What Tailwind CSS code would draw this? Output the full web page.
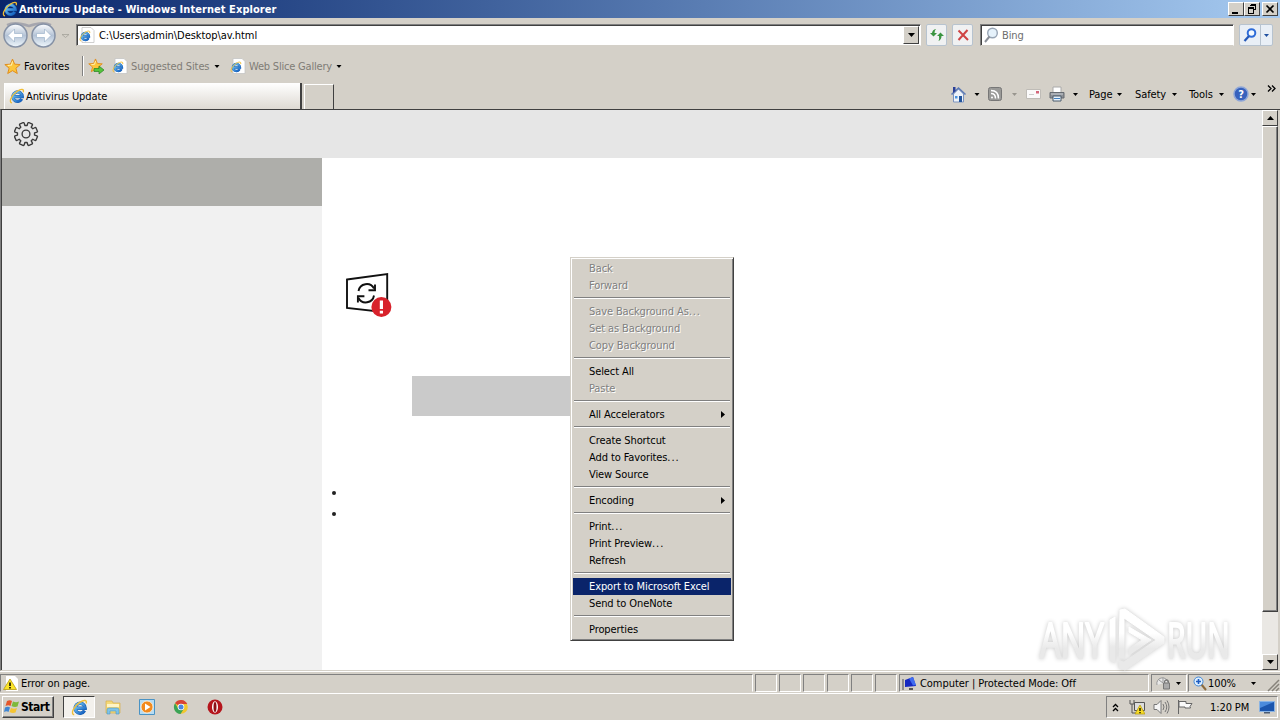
<!DOCTYPE html>
<html lang="en">

<head>
  <meta charset="UTF-8">
  <meta name="viewport" content="width=device-width, initial-scale=1.0">
  <title>Antivirus Update - Windows Internet Explorer</title>
  <script src="https://cdn.jsdelivr.net/npm/@tailwindcss/browser@4"></script>
</head>

<body class="w-[1280px] h-[720px] overflow-hidden bg-[#d4d0c8] text-black text-[11px] leading-[17px] tracking-[-0.1px] font-['DejaVu_Sans_Condensed','DejaVu_Sans',sans-serif] whitespace-nowrap">

  <!-- shared icons -->
  <svg class="absolute w-0 h-0">
    <defs>
      <linearGradient id="ball" x1="0" y1="0" x2="0" y2="1">
        <stop offset="0" stop-color="#fdfeff" />
        <stop offset=".5" stop-color="#b4c3d6" />
        <stop offset="1" stop-color="#f0f8fd" />
      </linearGradient>
      <linearGradient id="blue" x1="0" y1="0" x2="1" y2="1">
        <stop offset="0" stop-color="#7ad0f8" />
        <stop offset="1" stop-color="#0d58bd" />
      </linearGradient>
      <linearGradient id="mark" x1="0" y1="0" x2="0" y2="1">
        <stop offset=".4" stop-color="#ffffff" />
        <stop offset=".65" stop-color="#e9e9e9" />
        <stop offset="1" stop-color="#e9e9e9" />
      </linearGradient>
      <symbol id="ie" viewBox="0 0 16 16">
        <path d="M12.700 11a4.700 4.700 0 1 1 .6-2.300H5" fill="none" stroke="#1a5fae" stroke-width="3.200" />
        <path d="M12.700 11a4.700 4.700 0 1 1 .6-2.300H5" fill="none" stroke="url(#blue)" stroke-width="2.300" />
        <path d="M3 14.800C-.8 14.200 2.500 7 8.200 3.200c3.600-2.400 7.300-2.700 6 1" fill="none" stroke="#f0bd35" stroke-width="1.300" />
      </symbol>
      <symbol id="iepage" viewBox="0 0 16 16">
        <path d="M3 .5h9l3 3v12H3z" fill="#fff" stroke="#c4c4c4" stroke-width=".8" />
        <use href="#ie" x="0" y="3" width="12" height="12" />
      </symbol>
      <symbol id="star" viewBox="0 0 16 16">
        <path d="M8 1l2 4.800 5.200.4-4 3.400 1.300 5L8 11.900l-4.500 2.700 1.300-5-4-3.400L6 5.800z" fill="#fcc63c" stroke="#df8a1b" stroke-width=".9" />
        <path d="M8 3.200L7 6.700l-3.500.4" fill="none" stroke="#fff3b5" />
      </symbol>
      <symbol id="down" viewBox="0 0 5 3"><path d="M0 0h5L2.500 3z" fill="currentColor" /></symbol>
    </defs>
  </svg>

  <div class="relative flex flex-col w-full h-full">

    <!-- title bar -->
    <div class="flex items-center h-[18px] bg-linear-to-r from-[#0a246a] to-[#a6caf0] pl-[2px] pr-[2px]">
      <svg class="w-4 h-4"><use href="#ie" /></svg>
      <span class="pl-px text-white font-bold tracking-[0.06px]">Antivirus Update - Windows Internet Explorer</span>
      <div class="flex ml-auto">
        <div class="flex w-4 h-[14px] bg-[#d4d0c8] border border-t-white border-l-white border-r-[#404040] border-b-[#404040]"><svg class="w-[14px] h-3"><path d="M3 9h6v2H3z" /></svg></div>
        <div class="flex w-4 h-[14px] bg-[#d4d0c8] border border-t-white border-l-white border-r-[#404040] border-b-[#404040]"><svg class="w-[14px] h-3" fill="none" stroke="#000" shape-rendering="crispEdges"><path d="M5.500 1.500h5v5h-2M5 2.500h6M3.500 4.500h5v6h-5zM3 5.500h6" /></svg></div>
        <div class="flex w-4 h-[14px] ml-[2px] bg-[#d4d0c8] border border-t-white border-l-white border-r-[#404040] border-b-[#404040]"><svg class="w-[14px] h-3"><path d="M3.500 2.500l7 7M10.500 2.500l-7 7" stroke="#000" stroke-width="1.700" /></svg></div>
      </div>
    </div>

    <!-- address bar -->
    <div class="flex items-center h-[34px] pl-[2px] pr-[5px]">
      <svg class="w-[74px] h-[30px] shrink-0" viewBox="2 20 74 30">
        <path d="M7 25q8-4 22 1 14-5 22-1" fill="none" stroke="#a5a6ae" stroke-width="2.500" />
        <circle cx="15.500" cy="35.500" r="11.500" fill="url(#ball)" stroke="#8591a5" stroke-width="1.500" />
        <circle cx="43.500" cy="35.500" r="11.500" fill="url(#ball)" stroke="#8591a5" stroke-width="1.500" />
        <path d="M8 35.500l6.500-6.500v4.500h8v4h-8V42zM51 35.500L44.500 29v4.500h-8v4h8V42z" fill="#fff" stroke="#9fb4cb" stroke-width=".7" />
        <path d="M62 34.500h7l-3.500 3z" fill="#d4d0c8" stroke="#a5a29b" stroke-width=".8" />
      </svg>
      <div class="flex items-center w-[845px] h-[22px] bg-white border border-t-[#808080] border-l-[#808080] border-r-white border-b-[#d4d0c8] shadow-[inset_1px_1px_0_#404040]">
        <svg class="w-4 h-4 ml-[2px]"><use href="#iepage" /></svg>
        <span class="pl-1 pt-px tracking-[-0.06px]">C:\Users\admin\Desktop\av.html</span>
        <div class="flex items-center justify-center w-4 h-[18px] ml-auto mr-px bg-[#d4d0c8] border border-t-white border-l-white border-r-[#404040] border-b-[#404040]"><svg class="w-[7px] h-1"><path d="M0 0h7L3.500 4z" /></svg></div>
      </div>
      <div class="flex items-center justify-center w-[21px] h-[22px] ml-[5px] bg-[#f0f1f2] border border-[#b7c3cf] rounded-xs">
        <svg class="w-4 h-4" fill="#3a9440"><path d="M1 6l3.500 3.500L8 6H5.500q0-2.500 1.500-4-3.500.5-4 4zM8 9l3.500-3.500L15 9h-2.500q0 3.500-3 5 1-2.500.5-5z" /></svg>
      </div>
      <div class="flex items-center justify-center w-[21px] h-[22px] ml-[5px] bg-[#f0f1f2] border border-[#b7c3cf] rounded-xs">
        <svg class="w-4 h-4"><path d="M3.500 3.500l9.500 9.500M12.500 3l-9 10" stroke="#cf4444" stroke-width="2" /></svg>
      </div>
      <div class="flex items-center w-[254px] h-[22px] ml-[7px] bg-white border border-t-[#808080] border-l-[#808080] border-r-white border-b-[#d4d0c8] shadow-[inset_1px_1px_0_#404040]">
        <svg class="w-4 h-4 ml-[2px]" fill="none"><circle cx="9.500" cy="6" r="4.800" fill="#e6f2fb" stroke="#98a5b5" stroke-width="1.400" /><path d="M6.500 9.500L2 15" stroke="#8a8f98" stroke-width="2" /></svg>
        <span class="pl-[3px] pt-px text-[#6d6d6d]">Bing</span>
      </div>
      <div class="flex items-center w-[34px] h-[22px] ml-[5px] bg-[#e9eff6] border border-[#b7c3cf] rounded-xs">
        <svg class="w-5 h-4" fill="none"><circle cx="11.500" cy="6" r="3.800" fill="#f4faff" stroke="#2e6cd8" stroke-width="2" /><path d="M9 9l-4.500 5" stroke="#2458b8" stroke-width="2.200" /></svg>
        <div class="flex items-center justify-center flex-1 h-full border-l border-[#b7c3cf] text-[#1f4fa0]"><svg class="w-[5px] h-[3px]"><use href="#down" /></svg></div>
      </div>
    </div>

    <!-- favorites bar -->
    <div class="flex items-center h-7 pl-1">
      <svg class="w-[17px] h-[17px]"><use href="#star" /></svg>
      <span class="w-[59px] pl-[3px] tracking-[0.1px]">Favorites</span>
      <div class="w-[2px] h-5 ml-[2px] border-l border-[#808080] border-r border-r-white"></div>
      <svg class="w-[17px] h-[17px] ml-[4px]"><use href="#star" width="15" height="15" /><path d="M6 10.500h5V8l5 4-5 4v-2.500H6z" fill="#54c43c" stroke="#268320" stroke-width=".7" /></svg>
      <svg class="w-4 h-4 ml-[7px]"><use href="#iepage" /></svg>
      <span class="w-[85px] pl-[3px] pt-px text-[#7f7c76]">Suggested Sites</span>
      <svg class="w-[6px] h-[3px] ml-px"><use href="#down" /></svg>
      <svg class="w-4 h-4 ml-[10px]"><use href="#iepage" /></svg>
      <span class="w-[87px] pl-[3px] pt-px tracking-[-0.2px] text-[#7f7c76]">Web Slice Gallery</span>
      <svg class="w-[6px] h-[3px] ml-[3px]"><use href="#down" /></svg>
    </div>

    <!-- tabs + command bar -->
    <div class="flex items-end h-[29px] pl-1">
      <div class="flex items-center w-[298px] h-[26px] pl-1 bg-linear-to-b from-white to-[#dedad3] border-r-2 border-[#404040] border-l border-l-white">
        <svg class="w-4 h-4"><use href="#ie" /></svg>
        <span class="pl-px">Antivirus Update</span>
      </div>
      <div class="w-[30px] h-[25px] ml-[2px] border-t border-l border-t-white border-l-white border-r border-r-[#404040]"></div>
      <div class="flex items-center h-[30px] ml-auto pr-[4px]">
        <svg class="w-[17px] h-[17px]"><path d="M3.500 8v8h10V8L8.500 3z" fill="#eef3fa" stroke="#7c93be" /><path d="M1.500 8.500l7-6.500 7 6.500" fill="none" stroke="#5c7ab5" stroke-width="1.600" /><path d="M3 1h2.500v4L3 7z" fill="#2a3f97" /><path d="M9 10h3v6H9z" fill="#23559c" /><path d="M5 10h2.500v2.500H5z" fill="#4a94df" /></svg>
        <svg class="w-[6px] h-[3px] ml-[7px]"><use href="#down" /></svg>
        <svg class="w-[14px] h-[14px] ml-[8px]" fill="none" stroke="#fff" stroke-width="1.500"><rect x=".5" y=".5" width="13" height="13" rx="2" fill="#9a9a98" stroke="#777" stroke-width="1" /><circle cx="4" cy="10.500" r="1" fill="#fff" stroke="none" /><path d="M3 6.500q4.500 0 4.500 5M3 3.500q7.500 0 7.500 8" /></svg>
        <svg class="w-[5px] h-[3px] ml-[10px] text-[#98958e]"><use href="#down" /></svg>
        <svg class="w-[15px] h-3 ml-[9px]"><path d="M.5 1.500h14v9H.5z" fill="#fbfafa" stroke="#bfbcb7" /><path d="M10 3h3v2.500h-3z" fill="#d4667a" /><path d="M3 6.500h5" stroke="#ccc" /></svg>
        <svg class="w-4 h-4 ml-2"><path d="M4 1h8v6H4z" fill="#fff" stroke="#aaa" /><path d="M1 6.500h14v5.500H1z" fill="#8c9096" stroke="#666b71" /><path d="M2 8h12" stroke="#c9cdd3" /><path d="M4 10h8v5H4z" fill="#e8f2fb" stroke="#4a5a6a" /><path d="M5 12.500h6" stroke="#4380be" /></svg>
        <svg class="w-[5px] h-[3px] ml-[8px]"><use href="#down" /></svg>
        <span class="w-[25px] ml-[11px]">Page</span>
        <svg class="w-[5px] h-[3px] ml-[3px]"><use href="#down" /></svg>
        <span class="w-8 ml-[13px]">Safety</span>
        <svg class="w-[5px] h-[3px] ml-[5px]"><use href="#down" /></svg>
        <span class="w-[26px] ml-[12px]">Tools</span>
        <svg class="w-[5px] h-[3px] ml-[4px]"><use href="#down" /></svg>
        <svg class="w-4 h-4 ml-[9px]"><circle cx="8" cy="8" r="7" fill="#3862bd" stroke="#8ea6d8" stroke-width="1.500" /><text x="8" y="12" text-anchor="middle" font-size="11" font-weight="bold" fill="#fff">?</text></svg>
        <svg class="w-[5px] h-[3px] ml-[2px]"><use href="#down" /></svg>
        <svg class="w-[9px] h-[7px] ml-[11px] mb-3" fill="none" stroke="#000" stroke-width="1.300"><path d="M1 .5l3 3-3 3M5 .5l3 3-3 3" /></svg>
      </div>
    </div>

    <!-- page -->
    <div class="flex h-[562px] border-t border-t-[#404040] border-l border-l-[#808080] border-b border-b-[#d4d0c8] pr-[2px]">
      <div class="flex flex-col flex-1 bg-white border-l border-[#404040]">
        <div class="flex items-center h-12 pl-3 bg-[#e6e6e6]">
          <svg class="w-[25px] h-[25px]" viewBox="0 0 25 25" fill="none" stroke="#3a3a3a" stroke-width="1.350" stroke-linejoin="round">
            <path id="gear" d="" />
            <circle cx="12" cy="12" r="3.900" />
          </svg>
        </div>
        <div class="flex flex-1">
          <div class="w-80 bg-[#f1f1f1]">
            <div class="h-12 bg-[#aeaeaa]"></div>
          </div>
          <div class="flex-1">
            <svg class="w-[50px] h-[46px] mt-[114px] ml-[23px]" viewBox="345 272 50 46" fill="none" stroke="#111" stroke-width="1.900">
              <path d="M347 279.500l40.200-5.500v38.500L347 308z" />
              <path d="M358.500 291a8.300 8.300 0 0 1 15.500-2.500M374 295.500a8.300 8.300 0 0 1-15.500 2.500" />
              <path d="M375 284.500v5.800h-6.500M357.900 302.500v-6.300h6.500" />
              <circle cx="381.400" cy="307" r="10" fill="#d8222b" stroke="none" />
              <path d="M381.400 300.500v8.500M381.400 310.800v2.700" stroke="#fff" stroke-width="3.200" />
            </svg>
            <div class="w-[240px] h-10 mt-[58px] ml-[90px] bg-[#cacaca]"></div>
            <div class="w-[4px] h-[4px] mt-[75px] ml-[10px] rounded-full bg-[#222]"></div>
            <div class="w-[4px] h-[4px] mt-[17px] ml-[10px] rounded-full bg-[#222]"></div>
          </div>
        </div>
      </div>

      <!-- scrollbar -->
      <div class="flex flex-col w-4 bg-[#eae8e4]">
        <div class="flex items-center justify-center h-4 bg-[#d4d0c8] border border-t-white border-l-white border-r-[#404040] border-b-[#404040]"><svg class="w-[7px] h-1"><path d="M0 4h7L3.500 0z" /></svg></div>
        <div class="h-[486px] bg-[#d4d0c8] border border-t-white border-l-white border-r-[#404040] border-b-[#404040] shadow-[inset_-1px_-1px_0_#808080]"></div>
        <div class="flex items-center justify-center h-4 mt-auto bg-[#d4d0c8] border border-t-white border-l-white border-r-[#404040] border-b-[#404040]"><svg class="w-[7px] h-1"><path d="M0 0h7L3.500 4z" /></svg></div>
      </div>
    </div>

    <!-- status bar -->
    <div class="flex items-end h-[23px] pb-px border-t border-white border-b">
      <div class="flex items-center w-[753px] h-[18px] pl-[2px] border border-[#808080] border-r-white border-b-[#d4d0c8]">
        <svg class="w-[15px] h-[15px]"><path d="M3 0h9l3 3v12H3z" fill="#fff" /><path d="M7 3l6.500 10.500H.5z" fill="#fbe428" stroke="#b79a12" stroke-width=".8" /><path d="M7 6.500v3.500M7 11v1.500" stroke="#000" stroke-width="1.500" /></svg>
        <span class="pl-[3px]">Error on page.</span>
      </div>
      <div class="flex gap-[2px] pl-[2px]">
        <div class="w-[22px] h-[18px] border border-[#808080] border-r-white border-b-white"></div>
        <div class="w-[22px] h-[18px] border border-[#808080] border-r-white border-b-white"></div>
        <div class="w-[22px] h-[18px] border border-[#808080] border-r-white border-b-white"></div>
        <div class="w-[22px] h-[18px] border border-[#808080] border-r-white border-b-white"></div>
        <div class="w-[22px] h-[18px] border border-[#808080] border-r-white border-b-white"></div>
        <div class="w-[22px] h-[18px] border border-[#808080] border-r-white border-b-white"></div>
      </div>
      <div class="flex items-center w-[250px] h-[18px] ml-[2px] pl-[2px] border border-[#808080] border-r-white border-b-white">
        <svg class="w-4 h-4"><path d="M1 4v11" stroke="#777" stroke-width="1.500" /><path d="M3 5l8-3 3 9-11 1z" fill="#1528c0" /><path d="M7 3.500L11 2l3 8-3 .5z" fill="#3f6bf0" /><path d="M7 13h4v2H7z" fill="#555" /></svg>
        <span class="pl-[2px] tracking-[-0.05px]">Computer | Protected Mode: Off</span>
      </div>
      <div class="flex items-center w-[36px] h-[18px] ml-[2px] pl-1 border border-[#808080] border-r-white border-b-white">
        <svg class="w-4 h-4"><path d="M1 10a5.500 5.500 0 0 1 11-3" fill="#e8e8e8" stroke="#999" /><path d="M7 2.500v5M3 5l4 3" stroke="#999" /><path d="M7.500 8h6v6h-6z" fill="#aaa" stroke="#777" /><path d="M8.500 8q0-3 2-3t2 3" fill="none" stroke="#777" stroke-width="1.300" /></svg>
        <svg class="w-[5px] h-[3px] ml-[4px]"><use href="#down" /></svg>
      </div>
      <div class="flex items-center w-[92px] h-[18px] ml-px pl-[4px] border border-[#808080] border-r-0 border-b-white">
        <svg class="w-[14px] h-[15px]"><path d="M8 8l5 6" stroke="#8c6a3d" stroke-width="2" /><circle cx="5.500" cy="5.500" r="4.500" fill="#dceefe" stroke="#4387d6" /><path d="M5.500 3v5M3 5.500h5" stroke="#1c5bc0" stroke-width="1.600" /></svg>
        <span class="w-[30px] pl-px">100%</span>
        <svg class="w-[5px] h-[3px] ml-[14px]"><use href="#down" /></svg>
        <svg class="w-[13px] h-[13px] ml-auto mt-1" stroke="#87837b" stroke-width="1.500"><path d="M1 12L12 1M5 12l7-7M9 12l3-3" /></svg>
      </div>
    </div>

    <!-- taskbar -->
    <div class="flex items-center h-[26px] pl-[2px] pr-[2px]">
      <div class="flex items-center w-[52px] h-[22px] pl-px bg-[#d4d0c8] border border-t-white border-l-white border-r-[#404040] border-b-[#404040] shadow-[inset_-1px_-1px_0_#808080]">
        <svg class="w-4 h-4"><path d="M3 2q3-1.500 5 0L6.500 7q-2-1.500-5 0z" fill="#e5572b" /><path d="M9 2.500q3 1.500 6 0l-1.500 5q-3 1-6-.5z" fill="#7eb93b" /><path d="M1 8.500q3-1.500 5 0L4.500 13q-2-1.500-4.500 0z" fill="#3f86d3" /><path d="M7 9q3 1.500 6 0l-1.500 4.500q-3 1-6-.5z" fill="#f5c432" /></svg>
        <span class="pl-px font-bold text-[12px] tracking-[-0.45px]">Start</span>
      </div>
      <div class="flex items-center justify-center w-8 h-[22px] ml-[9px] bg-[#f3f1ed] border border-t-[#404040] border-l-[#404040] border-r-white border-b-white"><svg class="w-[17px] h-[17px]"><use href="#ie" /></svg></div>
      <svg class="w-4 h-4 ml-[10px]"><path d="M1 2h6l1 2h7v10H1z" fill="#f4d979" stroke="#d7b04b" stroke-width=".7" /><path d="M2 5h12v3H2z" fill="#fff4c5" /><path d="M2 15v-4q0-2 2-2h8q2 0 2 2v4h-3v-3H5v3z" fill="#7fc3e8" stroke="#4c97c2" stroke-width=".6" /></svg>
      <svg class="w-4 h-4 ml-[18px]"><path d="M.5.5h15v15H.5z" fill="#b6dcf3" stroke="#4a93c4" /><circle cx="8" cy="8" r="6" fill="#f28a1e" stroke="#fff3df" stroke-width=".8" /><path d="M6 4.500v7L11.500 8z" fill="#fff" /></svg>
      <svg class="w-4 h-4 ml-[18px]"><circle cx="8" cy="8" r="6.800" fill="#f1c72f" /><path d="M8 8L2 4.200A7 7 0 0 1 14.300 5H8z" fill="#d84336" /><path d="M2 4.200A7 7 0 0 0 7.500 15L11 9.500 8 8 5.200 9.500z" fill="#3ba356" /><circle cx="8" cy="8" r="3.300" fill="#fff" /><circle cx="8" cy="8" r="2.500" fill="#4a86e0" /></svg>
      <svg class="w-4 h-4 ml-[18px]"><circle cx="8" cy="8" r="7.500" fill="#b5151c" /><ellipse cx="8" cy="8" rx="3" ry="5.800" fill="#fff" /><ellipse cx="8" cy="8" rx="1.500" ry="5" fill="#8d1016" /></svg>
      <div class="flex items-center w-[172px] h-[22px] ml-auto pl-[5px] border border-[#808080] border-r-white border-b-white">
        <svg class="w-[7px] h-[9px]" fill="none" stroke="#000" stroke-width="1.300"><path d="M1 4l2.500-2.500L6 4M1 8l2.500-2.500L6 8" /></svg>
        <svg class="w-4 h-4 ml-[10px]"><path d="M5.500 3.500h10v8h-10z" fill="#ddd" stroke="#555" /><path d="M1 1v4h4V1M3 5v9h4" fill="none" stroke="#555" /><path d="M11 6l5 9H6z" fill="#f8dc26" stroke="#b3980c" stroke-width=".7" /><path d="M11 9v3M11 13v1.300" stroke="#000" stroke-width="1.300" /></svg>
        <svg class="w-[17px] h-4 ml-[8px]" fill="none" stroke="#777"><path d="M1 5.500h3l4-4v13l-4-4H1z" fill="#f5f5f5" /><path d="M10 5q2 3 0 6M12 3q3.500 5 0 10M14 1.500q4 6.500 0 13" /></svg>
        <svg class="w-4 h-4 ml-[7px]" fill="#fafafa" stroke="#666"><path d="M1.500 1v14M2 2.500h7v2h6l-2 3 .5 1.500H8V8H2z" /></svg>
        <span class="ml-[17px] pt-px">1:20 PM</span>
        <svg class="w-4 h-4 ml-auto mr-[2px]"><path d="M.5 2.500h15v10H.5z" fill="#1c56ad" stroke="#8ab4e4" /><path d="M1 3h14L1 9z" fill="#4b8bdc" /><path d="M5 13h6v1.500H5z" fill="#4a5a72" /></svg>
      </div>
    </div>

    <!-- context menu -->
    <div class="absolute left-[570px] top-[257px] w-[164px] h-[384px] p-px bg-[#d4d0c8] border border-t-[#d4d0c8] border-l-[#d4d0c8] border-r-[#404040] border-b-[#404040] shadow-[inset_1px_1px_0_#fff,inset_-1px_-1px_0_#808080]">
      <div id="menu" class="flex flex-col p-px"></div>
    </div>

    <!-- watermark -->
    <svg class="absolute left-[1030px] top-[602px] w-[210px] h-[74px] drop-shadow-[0_0_2px_rgba(0,0,0,0.22)]" viewBox="1030 602 210 74" fill="url(#mark)" stroke="url(#mark)" stroke-width="2.200" stroke-linejoin="round" font-family="Open Sans" font-size="49" letter-spacing="0">
      <text transform="translate(1040 658) scale(.67 1)">ANY</text>
      <text transform="translate(1167 658) scale(.61 1)">RUN</text>
      <g stroke-width="1">
        <path d="M1120 610l5-1 39 28v6l-39 27-6-2v-7l5 1 32-22-32-22v40h-5z" />
        <path d="M1110 620l5-3v46l-5-3zM1129 627l22 13-22 15v-6l13-9-13-8z" />
      </g>
    </svg>
  </div>

  <script>
    // null is a separator; state: 0 normal, 1 disabled, 2 submenu, 3 highlighted
    const items = [
      ['Back', 1], ['Forward', 1], null,
      ['Save Background As...', 1], ['Set as Background', 1], ['Copy Background', 1], null,
      ['Select All', 0], ['Paste', 1], null,
      ['All Accelerators', 2], null,
      ['Create Shortcut', 0], ['Add to Favorites...', 0], ['View Source', 0], null,
      ['Encoding', 2], null,
      ['Print...', 0], ['Print Preview...', 0], ['Refresh', 0], null,
      ['Export to Microsoft Excel', 3], ['Send to OneNote', 0], null,
      ['Properties', 0],
    ];
    const look = ['', 'text-[#808080] [text-shadow:1px_1px_0_#fff]', '', 'bg-[#0a246a] text-white'];
    const arrow = '<svg class="w-1 h-[7px] ml-auto mr-[6px]"><path d="M0 0v7l4-3.500z" /></svg>';
    document.getElementById('menu').innerHTML = items.map(item => item
      ? `<div class="flex items-center h-[17px] pl-4 ${look[item[1]]}"><span>${item[0].replace('...', '<span class="tracking-[0.9px]">...</span>')}</span>${item[1] == 2 ? arrow : ''}</div>`
      : '<div class="h-[2px] mt-[3px] mb-[4px] mx-px border-t border-[#808080] border-b border-b-white"></div>'
    ).join('');

    // eight-toothed gear outline
    let d = '';
    for (let i = 0; i < 8; i++) {
      [[-15, 8.6], [-13, 11.2], [-10, 11.8], [10, 11.8], [13, 11.2], [15, 8.6]].forEach(([a, r]) => {
        const t = (i * 45 + 22.5 + a) * Math.PI / 180;
        d += (d ? 'L' : 'M') + (12 + r * Math.cos(t)).toFixed(2) + ' ' + (12 + r * Math.sin(t)).toFixed(2);
      });
    }
    document.getElementById('gear').setAttribute('d', d + 'Z');
  </script>
</body>

</html>
